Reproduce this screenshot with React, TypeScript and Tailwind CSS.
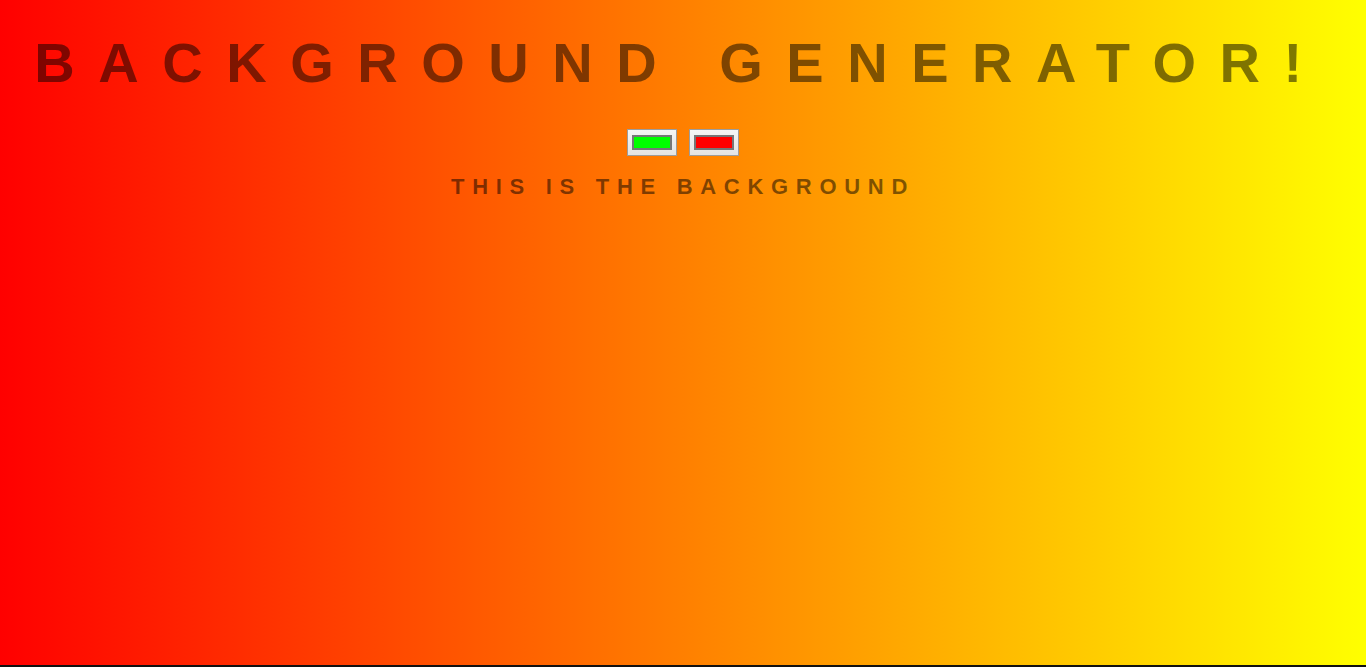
const Swatch = ({ color }: { color: string }) => (
  <div className="w-[50px] h-[27px] border border-[#9c9c9c] bg-[linear-gradient(#f5f5f5,#e4e4e4)] px-[4px] py-[5px]">
    <div className="w-full h-full border-2 border-[#777]" style={{ backgroundColor: color }} />
  </div>
);

export default function App() {
  return (
    <div className="h-screen flex flex-col font-['Liberation_Sans',Arial,sans-serif]">
      <div className="flex-1 bg-[linear-gradient(to_right,#ff0000,#ffff00)] text-center uppercase text-black/50">
        <h1 className="pt-[35px] pr-[6px] text-[56px] font-bold leading-none tracking-[0.42em]">
          Background Generator!
        </h1>
        <div className="mt-[38px] flex justify-center gap-[12px]">
          <Swatch color="#00ff00" />
          <Swatch color="#ff0000" />
        </div>
        <h3 className="mt-[20px] text-[22px] font-bold leading-none tracking-[0.35em]">
          This is the background
        </h3>
      </div>
      <div className="h-[2px] bg-[#111]" />
    </div>
  );
}
